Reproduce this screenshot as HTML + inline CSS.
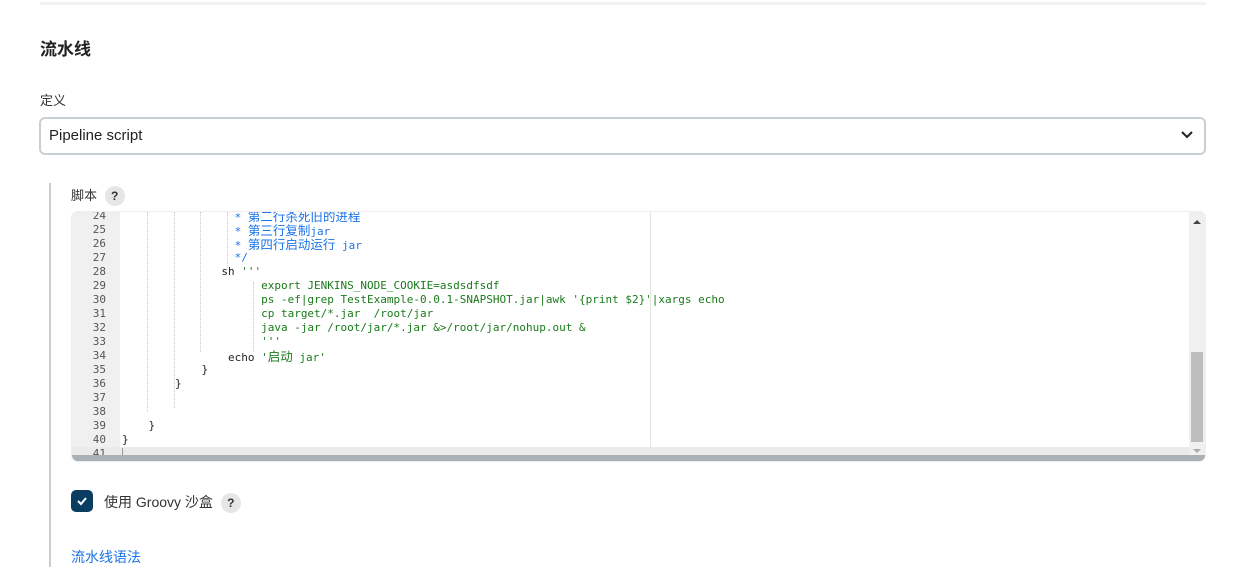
<!DOCTYPE html>
<html><head><meta charset="utf-8"><style>
body{margin:0;width:1258px;height:575px;background:#fff;font-family:"Liberation Sans","Noto Sans CJK SC",sans-serif;color:#333;position:relative;overflow:hidden}
.abs{position:absolute}
.code{position:absolute;left:72px;top:212px;width:1133px;height:249px;border-radius:6px;overflow:hidden;background:#fff;box-shadow:0 0 0 1px #eee}
.gut{position:absolute;left:0;top:0;width:48px;height:249px;background:#f0f0f0}
.ln{position:absolute;left:0;width:34px;text-align:right;font:11px "DejaVu Sans Mono","Noto Sans CJK SC",monospace;color:#555;line-height:14px}
.cl{position:absolute;left:50px;font:11px "DejaVu Sans Mono","Noto Sans CJK SC",monospace;white-space:pre;line-height:14px;color:#222}
.cj{font-size:12.5px;font-family:"Noto Sans CJK SC",sans-serif}
.c{color:#1a73e8}.s{color:#1a7a1a}
.g{position:absolute;border-left:1px dotted #ccc;width:0}
.q{display:inline-block;width:20px;height:20px;border-radius:50%;background:#e6e6e6;color:#333;font-size:12px;font-weight:bold;text-align:center;line-height:20px}
</style></head><body>
<div class="abs" style="left:40px;top:2px;width:1166px;height:3px;background:#f2f2f2"></div>
<div class="abs" style="left:40px;top:35px;font-size:17px;font-weight:bold;color:#222">流水线</div>
<div class="abs" style="left:40px;top:90px;font-size:13px">定义</div>
<div class="abs" style="left:39px;top:117px;width:1163px;height:34px;border:2px solid #c9d0d4;border-radius:6px"></div>
<div class="abs" style="left:49px;top:127px;font-size:15px;color:#222">Pipeline script</div>
<svg class="abs" style="left:1180px;top:130px" width="14" height="10"><path d="M2 2 L7 7 L12 2" stroke="#222" stroke-width="2" fill="none"/></svg>
<div class="abs" style="left:49px;top:183px;width:2px;height:384px;background:#c9d0d4"></div>
<div class="abs" style="left:71px;top:185px;font-size:13px">脚本 <span class="q" style="margin-left:4px">?</span></div>
<div class="code">
<div class="gut"></div>
<div class="abs" style="left:578px;top:0;width:1px;height:249px;background:#e3e3e3"></div>
<div class="abs" style="left:0;top:235px;width:1117px;height:8px;background:#ebebeb"></div>
<div class="abs" style="left:0;top:243px;width:1133px;height:6px;background:#aab1b7"></div>
<div class="g" style="left:75px;top:0;height:200px"></div>
<div class="g" style="left:102px;top:0;height:196px"></div>
<div class="g" style="left:128px;top:0;height:140px"></div>
<div class="g" style="left:155px;top:0;height:56px"></div>
<div class="g" style="left:181px;top:70px;height:70px"></div>
<div class="abs" style="left:50px;top:236px;width:1px;height:7px;background:#999"></div>
<div id="lines"></div>
<div class="abs" style="left:0;top:243px;width:1133px;height:6px;background:#aab1b7"></div>
<div class="abs" style="left:1117px;top:0;width:16px;height:243px;background:#f0f0f0"></div>
<div class="abs" style="left:1119px;top:140px;width:12px;height:90px;background:#bdbdbd"></div>
<svg class="abs" style="left:1119px;top:6px" width="12" height="8"><path d="M2 6 L6 2 L10 6Z" fill="#444"/></svg>
<svg class="abs" style="left:1119px;top:235px" width="12" height="8"><path d="M2 2 L6 6 L10 2Z" fill="#aaa"/></svg>
</div>
<div class="abs" style="left:71px;top:490px;width:22px;height:22px;border-radius:5px;background:#0b3d62"></div>
<svg class="abs" style="left:75px;top:494px" width="14" height="14"><path d="M3 7 L6 10 L11 4" stroke="#fff" stroke-width="2" fill="none"/></svg>
<div class="abs" style="left:104px;top:492px;font-size:14px">使用 Groovy 沙盒 <span class="q" style="margin-left:4px">?</span></div>
<div class="abs" style="left:71px;top:547px;font-size:14px;color:#1a73e8">流水线语法</div>
<script>
var L=[
[24,17,'<span class="c">* <span class="cj">第二行杀死旧的进程</span></span>'],
[25,17,'<span class="c">* <span class="cj">第三行复制</span>jar</span>'],
[26,17,'<span class="c">* <span class="cj">第四行启动运行</span> jar</span>'],
[27,17,'<span class="c">*/</span>'],
[28,15,'sh <span class="s">\'\'\'</span>'],
[29,21,'<span class="s">export JENKINS_NODE_COOKIE=asdsdfsdf</span>'],
[30,21,'<span class="s">ps -ef|grep TestExample-0.0.1-SNAPSHOT.jar|awk \'{print $2}\'|xargs echo</span>'],
[31,21,'<span class="s">cp target/*.jar  /root/jar</span>'],
[32,21,'<span class="s">java -jar /root/jar/*.jar &amp;>/root/jar/nohup.out &amp;</span>'],
[33,21,'<span class="s">\'\'\'</span>'],
[34,16,'echo <span class="s">\'<span class="cj">启动</span> jar\'</span>'],
[35,12,'}'],[36,8,'}'],[37,0,''],[38,0,''],[39,4,'}'],[40,0,'}'],[41,0,'']];
var h='';L.forEach(function(a,i){var t=-3+i*14;h+='<div class="ln" style="top:'+t+'px">'+a[0]+'</div><div class="cl" style="top:'+t+'px">'+' '.repeat(a[1])+a[2]+'</div>';});
document.getElementById('lines').innerHTML=h;
</script>
</body></html>
